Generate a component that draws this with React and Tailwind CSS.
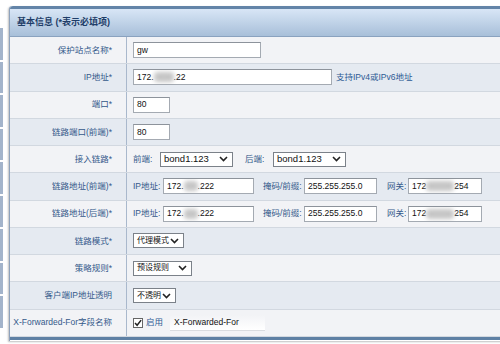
import React from "react";

const FONT = { fontFamily: '"Liberation Sans", "Noto Sans CJK SC", sans-serif' };

function Blur({ w = 18 }) {
  return (
    <span className="inline-block align-middle relative" style={{ width: w, height: 10 }}>
      <span className="absolute inset-0 bg-[#c6c6c6] blur-[2px] rounded-sm" />
    </span>
  );
}

function Input({ w, children, className = "" }) {
  return (
    <div
      className={`h-[16px] bg-white border border-[#a4aab2] border-t-[#8d939b] flex items-center pl-[3px] text-[8.5px] text-[#111] whitespace-nowrap overflow-hidden ${className}`}
      style={{ width: w }}
    >
      {children}
    </div>
  );
}

function Chevron() {
  return (
    <svg width="9" height="6" viewBox="0 0 9 6" className="shrink-0">
      <path d="M1 1 L4.5 4.5 L8 1" fill="none" stroke="#222" strokeWidth="1.6" />
    </svg>
  );
}

function Select({ w, children, size = "text-[8px]" }) {
  return (
    <div
      className={`h-[15px] bg-white border border-[#7b8189] flex items-center justify-between pl-[3px] pr-[4px] ${size} text-[#111] whitespace-nowrap`}
      style={{ width: w }}
    >
      <span>{children}</span>
      <Chevron />
    </div>
  );
}

function Row({ label, idx, children }) {
  const bg = idx % 2 === 0 ? "bg-[#f2f3f6]" : "bg-[#e5eaf1]";
  return (
    <div className={`flex h-[27.27px] border-b border-[#d2d8e0] ${bg}`}>
      <div className="w-[117px] shrink-0 border-r border-[#a9b8cc] flex items-center justify-end pr-[14px] text-[8.5px] text-[#34598a] whitespace-nowrap">
        {label}
      </div>
      <div className="flex items-center pl-[6px] text-[8.5px] text-[#34598a] whitespace-nowrap">
        {children}
      </div>
    </div>
  );
}

export default function App() {
  const strip = [0, 1, 2, 3, 4, 5, 6, 7, 8];
  return (
    <div className="w-[500px] h-[344px] bg-white overflow-hidden flex" style={FONT}>
      <div className="w-[3px] shrink-0 mt-[28px] flex flex-col gap-[2px]">
        {strip.map((i) => (
          <div key={i} className="h-[31.5px] bg-[#a3b4cb]" />
        ))}
      </div>
      <div className="ml-[6px] mt-[6px] w-[520px] shrink-0 h-[335px] flex flex-col border-l border-[#8ea2bc] rounded-tl-[3px] shadow-[-1px_1px_2px_rgba(0,0,0,0.25)]">
        <div className="h-[31px] border-t-[3px] border-[#6384a8] border-b border-b-[#8aa2bf] bg-gradient-to-b from-[#d8e6f6] to-[#a8bfd9] flex items-center pl-[7px] rounded-tl-[3px]">
          <span className="text-[9px] font-bold text-[#1e3d68]">基本信息 (*表示必填项)</span>
        </div>
        <Row label="保护站点名称*" idx={0}>
          <Input w={128}>gw</Input>
        </Row>
        <Row label="IP地址*" idx={1}>
          <Input w={199}>
            172.<Blur w={20} />.22
          </Input>
          <span className="ml-[4px] text-[#2d5a94]">支持IPv4或IPv6地址</span>
        </Row>
        <Row label="端口*" idx={2}>
          <Input w={37}>80</Input>
        </Row>
        <Row label="链路端口(前端)*" idx={3}>
          <Input w={37}>80</Input>
        </Row>
        <Row label="接入链路*" idx={4}>
          <span className="w-[27px]">前端:</span>
          <Select w={73} size="text-[9.5px]">bond1.123</Select>
          <span className="ml-[12px] w-[28px]">后端:</span>
          <Select w={73} size="text-[9.5px]">bond1.123</Select>
        </Row>
        {["链路地址(前端)*", "链路地址(后端)*"].map((l, i) => (
          <Row key={l} label={l} idx={5 + i}>
            <span className="w-[30px]">IP地址:</span>
            <Input w={91}>
              172.<Blur w={14} />.222
            </Input>
            <span className="ml-[9px] w-[41px]">掩码/前缀:</span>
            <Input w={73}>255.255.255.0</Input>
            <span className="ml-[10px] w-[21px]">网关:</span>
            <Input w={74}>
              172<Blur w={28} />254
            </Input>
          </Row>
        ))}
        <Row label="链路模式*" idx={7}>
          <Select w={51}>代理模式</Select>
        </Row>
        <Row label="策略规则*" idx={8}>
          <Select w={59}>预设规则</Select>
        </Row>
        <Row label="客户端IP地址透明" idx={9}>
          <Select w={43}>不透明</Select>
        </Row>
        <Row label="X-Forwarded-For字段名称" idx={10}>
          <span className="w-[10px] h-[10px] bg-white border border-[#666] flex items-center justify-center">
            <svg width="9" height="8" viewBox="0 0 9 8">
              <path d="M1.2 4 L3.5 6.5 L8 0.8" fill="none" stroke="#222" strokeWidth="1.7" />
            </svg>
          </span>
          <span className="ml-[3px] text-[#2d5a94]">启用</span>
          <div className="ml-[7px] w-[95px] h-[16px] flex items-center pl-[4px] text-[8.5px] text-[#111] border-b border-[#d9dce0] bg-gradient-to-b from-[#f2f3f6] to-white">
            X-Forwarded-For
          </div>
        </Row>
        <div className="h-[3px] bg-[#5e80a4]" />
      </div>
    </div>
  );
}
